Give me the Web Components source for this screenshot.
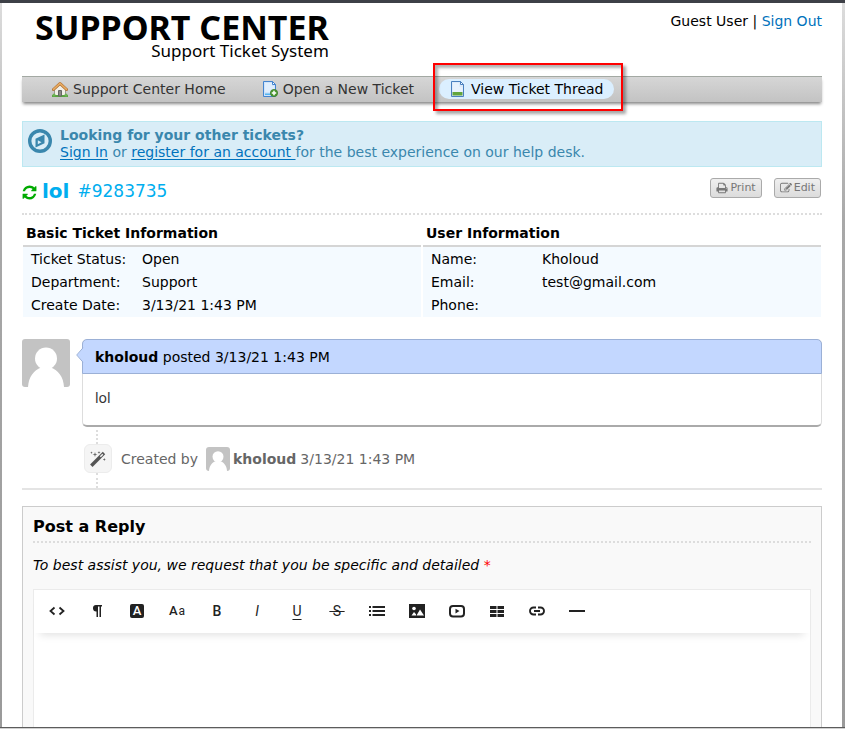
<!DOCTYPE html>
<html lang="en">
<head>
<meta charset="utf-8">
<title>Support Center</title>
<style>
  html { background: #a6a6a6; }
  body { margin: 0; font: 14px/20px "DejaVu Sans", Verdana, sans-serif; color: #000; }
</style>
</head>
<body>
<support-page>
  <site-header slot="header" heading="SUPPORT CENTER" tagline="Support Ticket System"></site-header>
  <site-nav slot="nav">
    <nav-link icon="home">Support Center Home</nav-link>
    <nav-link icon="new">Open a New Ticket</nav-link>
    <nav-link icon="thread" active>View Ticket Thread</nav-link>
  </site-nav>
  <info-banner></info-banner>
  <ticket-title subject="lol" number="#9283735">
    <action-button icon="print">Print</action-button>
    <action-button icon="edit">Edit</action-button>
  </ticket-title>
  <ticket-info></ticket-info>
  <thread-entry author="kholoud" time="3/13/21 1:43 PM">lol</thread-entry>
  <thread-event author="kholoud" time="3/13/21 1:43 PM">Created by</thread-event>
  <reply-form><rich-editor></rich-editor></reply-form>
</support-page>

<script>
const define = (name, render) => customElements.define(name, class extends HTMLElement {
  connectedCallback() {
    if (this.shadowRoot) return;
    const root = this.attachShadow({ mode: 'open' });
    const t = document.createElement('template');
    t.innerHTML = '<style>*{box-sizing:border-box}svg{display:block}</style>' + render(this);
    root.append(t.content.cloneNode(true));
  }
});
const at = (el, n) => el.getAttribute(n) || '';

const icons = {
  home: `<svg width="16" height="16" viewBox="0 0 16 16"><path d="M2.500 8v6.500h11V8L8 3z" fill="#f1efe8" stroke="#9a9a90"/><path d="M0 14h16v2H0z" fill="#5aa343"/><circle cx="2" cy="14" r="1.500" fill="#6db455"/><circle cx="14" cy="14" r="1.500" fill="#6db455"/><path d="M6.500 9.500h3V15h-3z" fill="#8b8b86" stroke="#666"/><path d="M1.500 8.500 8 2.500l6.500 6" fill="none" stroke="#a9692c" stroke-width="3" stroke-linecap="round" stroke-linejoin="round"/><path d="M1.500 8.400 8 2.400l6.500 6" fill="none" stroke="#e8ab62" stroke-width="1.700" stroke-linecap="round"/></svg>`,
  new: `<svg width="16" height="16" viewBox="0 0 16 16"><path d="M1.500.5h9l3 3v12h-12z" fill="#cfe4fb" stroke="#4384d0"/><path d="M3 2h7v3h2.500v6H3z" fill="#e0eefd"/><path d="M10.500.5v3h3z" fill="#fff" stroke="#4384d0"/><path d="M3 12.500h7V14H3z" fill="#55b5ef"/><circle cx="12" cy="12" r="3.600" fill="#4e9a33" stroke="#3a7c24" stroke-width=".8"/><path d="M12 9.800v4.400M9.800 12h4.400" stroke="#fff" stroke-width="1.500"/></svg>`,
  thread: `<svg width="16" height="16" viewBox="0 0 16 16"><path d="M1.500.5h9l3 3v12h-12z" fill="#dcebfb" stroke="#4a80bf"/><path d="M3 2h6v4h3.500v5H3z" fill="#e8f2fd"/><path d="M10.500.5v3h3z" fill="#fff" stroke="#4a80bf"/><path d="M2.500 11h10v3.500h-10z" fill="#62a53c"/></svg>`,
  print: `<svg width="12" height="12" viewBox="0 0 1792 1792" fill="currentColor"><path d="M448 1536h896v-256h-896v256zm0-640h896v-384h-160q-40 0-68-28t-28-68v-160h-640v640zm1152 64q0-26-19-45t-45-19-45 19-19 45 19 45 45 19 45-19 19-45zm128 0v416q0 13-9.500 22.500t-22.500 9.500h-224v160q0 40-28 68t-68 28h-960q-40 0-68-28t-28-68v-160h-224q-13 0-22.500-9.500t-9.500-22.500v-416q0-79 56.500-135.500t135.500-56.500h64v-544q0-40 28-68t68-28h672q40 0 88 20t76 48l152 152q28 28 48 76t20 88v256h64q79 0 135.500 56.500t56.500 135.500z"/></svg>`,
  edit: `<svg width="12" height="12" viewBox="0 0 1792 1792" fill="currentColor"><path d="M888 1184l116-116-152-152-116 116v56h96v96h56zm440-720q-16-16-33 1l-350 350q-17 17-1 33t33-1l350-350q17-17 1-33zm80 594v190q0 119-84.500 203.500t-203.500 84.500h-832q-119 0-203.500-84.500t-84.500-203.500v-832q0-119 84.500-203.500t203.500-84.500h832q63 0 117 25 15 7 18 23 3 17-9 29l-49 49q-14 14-32 8-23-6-45-6h-832q-66 0-113 47t-47 113v832q0 66 47 113t113 47h832q66 0 113-47t47-113v-126q0-13 9-22l64-64q15-15 35-7t20 29zm-96-738l288 288-672 672h-288v-288zm444 132l-92 92-288-288 92-92q28-28 68-28t68 28l152 152q28 28 28 68t-28 68z"/></svg>`,
  refresh: `<svg width="15" height="15" viewBox="64 64 1664 1664" fill="#0a0"><path d="M1639 1056q0 5-1 7-64 268-268 434.500t-478 166.500q-146 0-282.500-55t-243.500-157l-129 129q-19 19-45 19t-45-19-19-45v-448q0-26 19-45t45-19h448q26 0 45 19t19 45-19 45l-137 137q71 66 161 102t187 36q134 0 250-65t186-179q11-17 53-117 8-23 30-23h192q13 0 22.500 9.500t9.500 22.500zm25-800v448q0 26-19 45t-45 19h-448q-26 0-45-19t-19-45 19-45l138-138q-148-137-349-137-134 0-250 65t-186 179q-11 17-53 117-8 23-30 23h-199q-13 0-22.500-9.500t-9.500-22.500v-7q65-268 270-434.500t480-166.500q146 0 284 55.500t245 156.500l130-129q19-19 45-19t45 19 19 45z"/></svg>`,
  compass: `<svg width="24" height="24" viewBox="0 0 24 24"><circle cx="12" cy="12" r="10.300" fill="none" stroke="#3a87ad" stroke-width="3.400"/><path d="M16.500 5.500v8.700L7.500 18.500V9.800z" fill="#3a87ad"/><path d="M9.800 11.200 14 9v4.300l-2 1v-3.200z" fill="#3a87ad"/><path d="M9.800 11.300 13.500 13.200 9.800 15.200z" fill="#d9edf7"/></svg>`,
  magic: `<svg width="16" height="16" viewBox="0 0 16 16"><path d="M2.500 13.500 12.800 3.200" stroke="#555" stroke-width="3.400" stroke-linecap="square" fill="none"/><path d="M10.300 5.700l2.500-2.500" stroke="#f5f5f5" stroke-width="1.400"/><g fill="#666"><path d="M5 1l.6 1.900L7.500 3.500l-1.900.6L5 6l-.6-1.900-1.900-.6 1.900-.6zM9 0l.4 1.100L10.500 1.500l-1.100.4L9 3l-.4-1.100-1.100-.4 1.100-.4zM14.300 7l.4 1.100 1.100.4-1.100.4-.4 1.100-.4-1.100-1.100-.4 1.100-.4zM1.500.5l.4.8.8.4-.8.400-.4.8-.4-.8L.3 1.700l.8-.4z"/></g></svg>`
};

define('support-page', () => `
<style>
  :host { display: flex; flex-direction: column; height: 100vh; overflow: hidden; border-top: 3px solid #3d4047; box-sizing: border-box; }
  .frame { flex: 1; min-height: 0; display: flex; flex-direction: column; padding: 0 3px 0 2px; background: linear-gradient(#dcdcdc, #a8a8a8 30%, #9a9a9a); overflow: hidden; }
  .sheet { flex: 1; background: #fff; padding: 8px 20px 0; display: flex; flex-direction: column; min-height: 0; overflow: hidden; }
  main { display: flex; flex-direction: column; flex: 1; min-height: 0; padding-top: 19px; }
  .edge { height: 2px; flex: none; background: #d0d0d0; border-top: 1px solid #5c5c5c; box-sizing: border-box; }
  slot[name=nav] { display: block; }
</style>
<div class="frame"><div class="sheet"><slot name="header"></slot><slot name="nav"></slot><main><slot></slot></main></div></div>
<div class="edge"></div>`);

define('site-header', el => `
<style>
  :host { display: flex; justify-content: space-between; align-items: flex-start; height: 65px; }
  .logo { display: flex; flex-direction: column; align-items: flex-end; margin-left: 13px; color: #000; text-decoration: none; font-family: "Noto Sans", "Open Sans", sans-serif; }
  strong { font-size: 34px; line-height: 32px; font-weight: 700; }
  span { font-size: 17px; line-height: 16px; }
  a { color: #0072bc; text-decoration: none; }
</style>
<a class="logo" href="#"><strong>${at(el, 'heading')}</strong><span>${at(el, 'tagline')}</span></a>
<div>Guest User | <a href="#">Sign Out</a></div>`);

define('site-nav', () => `
<style>
  :host { display: block; }
  nav { display: flex; align-items: center; gap: 15px; height: 26px; padding: 0 19px 2px; background: linear-gradient(#d6d6d6, #c3c3c3); border-top: 1px solid #a3a9a3; box-shadow: 0 3px 3px -1px #888; }
</style>
<nav><slot></slot></nav>`);

define('nav-link', el => `
<style>
  :host { position: relative; display: block; color: #333; }
  a { display: flex; align-items: center; gap: 5px; height: 20px; padding: 0 10px 0 11px; border-radius: 10px; color: inherit; text-decoration: none; white-space: nowrap; }
  :host([active]) { color: #000; }
  :host([active]) a { background: #dbefff; }
  :host([active])::after { content: ""; position: absolute; inset: -16px -9px -12px -6px; border: 2px solid #f00; box-shadow: 3px 3px 3px rgba(0,0,0,.35), inset 3px 3px 3px rgba(0,0,0,.3); pointer-events: none; }
</style>
<a href="#">${icons[at(el, 'icon')]}<span><slot></slot></span></a>`);

define('info-banner', () => `
<style>
  :host { display: flex; gap: 8px; padding: 5px; border: 1px solid #bce8f1; background: #d9edf7; color: #3a87ad; line-height: 17px; min-height: 46px; box-sizing: border-box; }
  .icon { padding-top: 2px; }
  a { color: #0072bc; text-underline-offset: 2px; }
</style>
<div class="icon">${icons.compass}</div>
<div><strong>Looking for your other tickets?</strong><br><a href="#">Sign In</a> or <a href="#">register for an account </a>for the best experience on our help desk.</div>`);

define('ticket-title', el => `
<style>
  :host { display: flex; align-items: flex-start; justify-content: space-between; height: 48px; padding: 11px 1px 0; border-bottom: 2px dotted #ddd; box-sizing: border-box; }
  h1 { display: flex; align-items: center; margin: 0 0 0 -1px; font-size: 20px; line-height: 26px; color: #00aeef; }
  h1 a { display: flex; padding: 2px 5px 0 0; }
  small { font-size: 17px; font-weight: 400; margin-left: 8px; }
  .actions { display: flex; gap: 12px; }
</style>
<h1><a href="#" aria-label="Reload">${icons.refresh}</a>${at(el, 'subject')}<small>${at(el, 'number')}</small></h1>
<div class="actions"><slot></slot></div>`);

define('action-button', el => `
<style>
  :host { display: block; }
  button { display: flex; align-items: center; gap: 2px; height: 20px; margin: 0; padding: 0 5px; border: 1px solid #aaa; border-radius: 3px; background: linear-gradient(#efefef, #dcdcdc); color: #777; font: 11px/16px "DejaVu Sans", sans-serif; }
</style>
<button type="button">${icons[at(el, 'icon')]}<span><slot></slot></span></button>`);

define('ticket-info', () => {
  const table = (caption, rows) => `<table><caption>${caption}</caption><tbody>${rows.map(([k, v]) => `<tr><th scope="row">${k}:</th><td>${v}</td></tr>`).join('')}</tbody></table>`;
  return `
<style>
  :host { display: grid; grid-template-columns: 1fr 1fr; gap: 2px; padding: 6px 1px 0; align-items: start; }
  table { width: 100%; border-spacing: 0; background: #f4faff; border-bottom: 1px solid #f4faff; }
  caption { padding: 2px 3px; background: #fff; border-bottom: 2px solid #d5d5d5; font-weight: 700; text-align: left; box-sizing: border-box; height: 26px; }
  th, td { height: 23px; padding: 0; font-weight: 400; text-align: left; white-space: nowrap; }
  th { width: 119px; padding-left: 8px; }
</style>
${table('Basic Ticket Information', [['Ticket Status', 'Open'], ['Department', 'Support'], ['Create Date', '3/13/21 1:43 PM']])}
${table('User Information', [['Name', 'Kholoud'], ['Email', 'test@gmail.com'], ['Phone', '']])}`;
});

define('user-avatar', () => `
<style>
  :host { display: block; width: 48px; height: 48px; border-radius: 3px; overflow: hidden; background: #c3c3c3; }
  svg { width: 100%; height: 100%; }
</style>
<svg viewBox="0 0 48 48" fill="#fff" role="img" aria-label="Avatar"><ellipse cx="24" cy="19.500" rx="11" ry="11"/><path d="M6 48C6.500 38 12 31 19 28.500h10C36 31 41.500 38 42 48z"/></svg>`);

define('thread-entry', el => `
<style>
  :host { display: flex; gap: 12px; padding-top: 22px; }
  article { position: relative; flex: 1; border: 1px solid #ddd; border-top: 0; border-bottom: 2px solid #aaa; border-radius: 5px; }
  header { height: 35px; margin: 0 -1px; padding: 7px 12px; border: 1px solid #9bb0d6; border-radius: 5px 5px 0 0; background: #c3d7ff; }
  .arrow { position: absolute; left: -7px; top: 8px; }
  .body { padding: 14px 12px 17px; font: 14px/20px "Noto Sans", sans-serif; color: #333; }
</style>
<user-avatar></user-avatar>
<article>
  <header><b>${at(el, 'author')}</b> posted ${at(el, 'time')}</header>
  <svg class="arrow" width="8" height="16" viewBox="0 0 8 16"><path d="M8 .5 7 1 1 8l6 7 1 .5z" fill="#c3d7ff"/><path d="M7 .8.7 8 7 15.200" fill="none" stroke="#9bb0d6"/></svg>
  <div class="body"><slot></slot></div>
</article>`);

define('thread-event', el => `
<style>
  :host { display: flex; flex-direction: column; padding: 3px 0 0; border-bottom: 2px solid #e4e4e4; color: #666; }
  .stem { height: 14px; margin-left: 74px; border-left: 2px dotted #ddd; }
  .row { display: flex; align-items: center; height: 29px; margin-left: 62px; }
  .badge { display: grid; place-items: center; width: 28px; height: 29px; margin-right: 9px; border: 1px solid #ececec; border-radius: 6px; background: #f5f5f5; }
  user-avatar { width: 24px; height: 24px; margin: 0 3px 0 8px; }
  time { margin-left: 4px; }
  .tail { height: 15px; }
</style>
<div class="stem"></div>
<div class="row"><span class="badge">${icons.magic}</span><slot></slot><user-avatar></user-avatar><b>${at(el, 'author')}</b><time>${at(el, 'time')}</time></div>
<div class="stem tail"></div>`);

define('reply-form', () => `
<style>
  :host { display: flex; flex: 1; min-height: 0; padding-top: 16px; }
  form { flex: 1; display: flex; flex-direction: column; border: 1px solid #ccc; border-bottom: 0; background: #f9f9f9; padding: 10px 10px 0; min-height: 0; }
  h2 { margin: 0; padding-bottom: 4px; border-bottom: 2px dotted #ddd; font-size: 16px; line-height: 20px; }
  p { margin: 12px 0 14px; }
  span { color: #f00; }
</style>
<form><h2>Post a Reply</h2><p><em>To best assist you, we request that you be specific and detailed</em> <span>*</span></p><slot></slot></form>`);

const stroke = (d, w = 2) => `<svg width="18" height="18" viewBox="0 0 18 18"><path d="${d}" fill="none" stroke="#222" stroke-width="${w}"/></svg>`;
const fill = body => `<svg width="18" height="18" viewBox="0 0 18 18" fill="#222">${body}</svg>`;
const tools = [
  ['HTML', stroke('M6.500 5.500 2.500 9l4 3.500M11.500 5.500l4 3.500-4 3.500', 1.800)],
  ['Format', fill('<path d="M8 3h6v1.500h-1V15h-1.500V4.500H10V15H8.500V9.500A3.250 3.250 0 0 1 8 3z"/>')],
  ['Text color', '<span class="chip">A</span>'],
  ['Font', '<span class="aa">A<small>a</small></span>'],
  ['Bold', '<b>B</b>'],
  ['Italic', '<i>I</i>'],
  ['Underline', '<u>U</u>'],
  ['Strikethrough', '<s>&nbsp;S&nbsp;</s>'],
  ['Lists', fill('<path d="M1 4h2v2H1zM4.500 4H17v2H4.500zM1 8h2v2H1zM4.500 8H17v2H4.500zM1 12h2v2H1zM4.500 12H17v2H4.500z"/>')],
  ['Image', fill('<path d="M1 2h16v14H1z"/><circle cx="6" cy="6.500" r="1.800" fill="#fff"/><path d="M3.500 13.500 6 10l2 2.300v1.200zM8.500 13.500l3.500-6 4 6z" fill="#fff"/>')],
  ['Video', fill('<rect x="2" y="4" width="14" height="10.500" rx="3" fill="none" stroke="#222" stroke-width="2"/><path d="M7.500 6.700v4.800L11.500 9z"/>')],
  ['Table', fill('<path d="M2 4h6.500v3H2zM9.500 4H16v3H9.500zM2 8h6.500v3H2zM9.500 8H16v3H9.500zM2 12h6.500v3H2zM9.500 12H16v3H9.500z"/>')],
  ['Link', stroke('M8 5.500H5.500a3.500 3.500 0 0 0 0 7H8M10 5.500h2.500a3.500 3.500 0 0 1 0 7H10M6 9h6', 1.900)],
  ['Line', stroke('M1 9h16')]
];
define('tool-button', el => `
<style>
  :host { display: block; }
  button { display: grid; place-items: center; width: 40px; height: 34px; padding: 0; border: 0; background: none; color: #222; font: 14px/18px Roboto, sans-serif; }
  b { font-weight: 500; }
  .chip { width: 14px; height: 14px; line-height: 14px; border-radius: 2px; background: #222; color: #fff; font-size: 13px; font-weight: 500; }
  .aa { font-size: 13px; font-weight: 500; }
  small { font-size: 12px; font-weight: 400; margin-left: 1px; }
  u { text-underline-offset: 3px; text-decoration-thickness: 1px; }
</style>
<button type="button" aria-label="${tools[at(el, 'tool')][0]}">${tools[at(el, 'tool')][1]}</button>`);

define('rich-editor', () => `
<style>
  :host { display: flex; flex-direction: column; flex: 1; min-height: 0; margin: 0; border: 1px solid #ebebeb; border-bottom: 0; background: #fff; }
  .bar { display: flex; position: relative; height: 43px; padding: 4px 3px 5px; background: #fff; box-shadow: 0 8px 8px -6px rgba(0,0,0,.12); box-sizing: border-box; flex: none; }
  textarea { flex: 1; min-height: 0; width: 100%; padding: 16px; border: 0; outline: 0; resize: none; background: #fff; font: 14px/20px "Noto Sans", sans-serif; }
</style>
<div class="bar" role="toolbar" aria-label="Formatting">${tools.map((t, i) => `<tool-button tool="${i}"></tool-button>`).join('')}</div>
<textarea aria-label="Reply"></textarea>`);
</script>
</body>
</html>
